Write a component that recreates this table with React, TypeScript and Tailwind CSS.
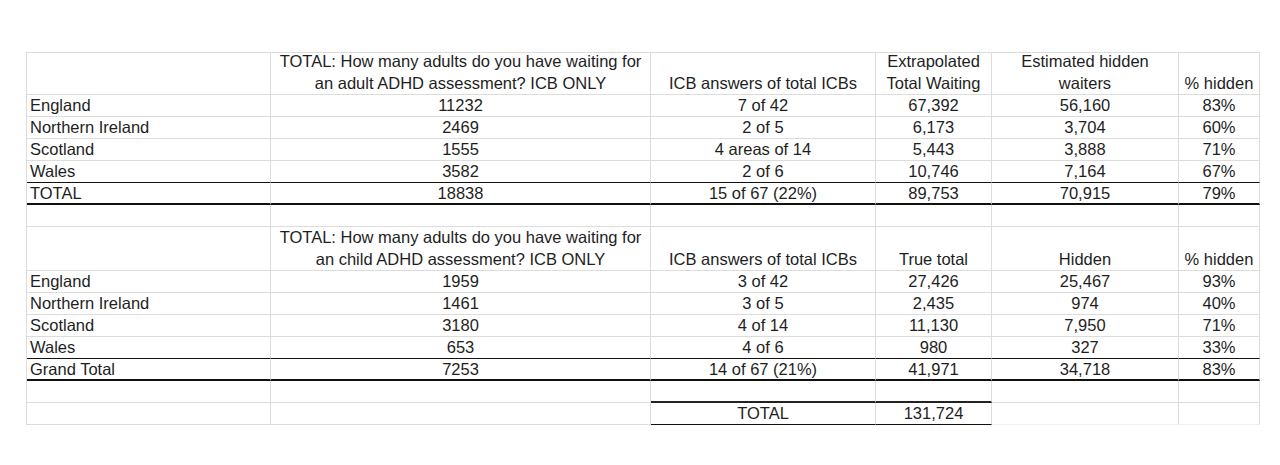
const colW = ["w-[244px]", "w-[380px]", "w-[225px]", "w-[116px]", "w-[187px]", "w-[81px]"]

const GRID = "border-b border-b-[#dcdcdc]"
const THIN = "border-b border-b-[#111]"
const THICK = "border-b-2 border-b-[#111]"

type RowProps = {
  cells: string[][] | string[]
  h: string
  bottom?: string
  header?: boolean
  cellBottom?: (string | null)[]
}

function Row({ cells, h, bottom = GRID, header = false, cellBottom }: RowProps) {
  return (
    <div className={`flex ${h}`}>
      {colW.map((w, i) => {
        const c = cells[i]
        const lines = Array.isArray(c) ? c : c ? [c] : []
        const b = cellBottom?.[i] ?? bottom
        return (
          <div
            key={i}
            className={`${w} shrink-0 h-full border-r border-r-[#dcdcdc] ${b} flex flex-col ${
              header ? "justify-end" : "justify-start"
            } ${i === 0 ? "items-start pl-[3px]" : "items-center"} overflow-hidden`}
          >
            {lines.map((t, j) => (
              <span key={j} className={`whitespace-nowrap ${header ? "leading-[22px]" : "leading-[20px]"}`}>
                {t}
              </span>
            ))}
          </div>
        )
      })}
    </div>
  )
}

const adults = [
  ["England", "11232", "7 of 42", "67,392", "56,160", "83%"],
  ["Northern Ireland", "2469", "2 of 5", "6,173", "3,704", "60%"],
  ["Scotland", "1555", "4 areas of 14", "5,443", "3,888", "71%"],
  ["Wales", "3582", "2 of 6", "10,746", "7,164", "67%"],
]

const children = [
  ["England", "1959", "3 of 42", "27,426", "25,467", "93%"],
  ["Northern Ireland", "1461", "3 of 5", "2,435", "974", "40%"],
  ["Scotland", "3180", "4 of 14", "11,130", "7,950", "71%"],
  ["Wales", "653", "4 of 6", "980", "327", "33%"],
]

export default function App() {
  return (
    <div className="w-[1280px] h-[465px] bg-white pt-[52px] pl-[26px] text-[16.5px] text-[#1e1e1e] font-['Liberation_Sans',Arial,sans-serif]">
      <div className="w-[1234px] border-l border-t border-l-[#dcdcdc] border-t-[#dcdcdc]">
        <Row
          header
          h="h-[42px]"
          cells={[
            "",
            ["TOTAL: How many adults do you have waiting for", "an adult ADHD assessment? ICB ONLY"],
            "ICB answers of total ICBs",
            ["Extrapolated", "Total Waiting"],
            ["Estimated hidden", "waiters"],
            "% hidden",
          ]}
        />
        {adults.map((r, i) => (
          <Row key={r[0]} h="h-[22px]" cells={r} bottom={i === 3 ? THIN : GRID} />
        ))}
        <Row h="h-[22px]" bottom={THICK} cells={["TOTAL", "18838", "15 of 67 (22%)", "89,753", "70,915", "79%"]} />
        <Row h="h-[22px]" cells={["", "", "", "", "", ""]} />
        <Row
          header
          h="h-[44px]"
          cells={[
            "",
            ["TOTAL: How many adults do you have waiting for", "an child ADHD assessment? ICB ONLY"],
            "ICB answers of total ICBs",
            "True total",
            "Hidden",
            "% hidden",
          ]}
        />
        {children.map((r, i) => (
          <Row key={r[0] + "c"} h="h-[22px]" cells={r} bottom={i === 3 ? THIN : GRID} />
        ))}
        <Row h="h-[22px]" bottom={THICK} cells={["Grand Total", "7253", "14 of 67 (21%)", "41,971", "34,718", "83%"]} />
        <Row
          h="h-[22px]"
          cells={["", "", "", "", "", ""]}
          cellBottom={[null, null, "border-b-2 border-b-[#222]", "border-b-2 border-b-[#222]", null, null]}
        />
        <Row
          h="h-[22px]"
          cells={["", "", "TOTAL", "131,724", "", ""]}
          cellBottom={[null, null, THIN, THIN, "border-b border-b-[#f0f0f0]", "border-b border-b-[#f0f0f0]"]}
        />
      </div>
    </div>
  )
}
